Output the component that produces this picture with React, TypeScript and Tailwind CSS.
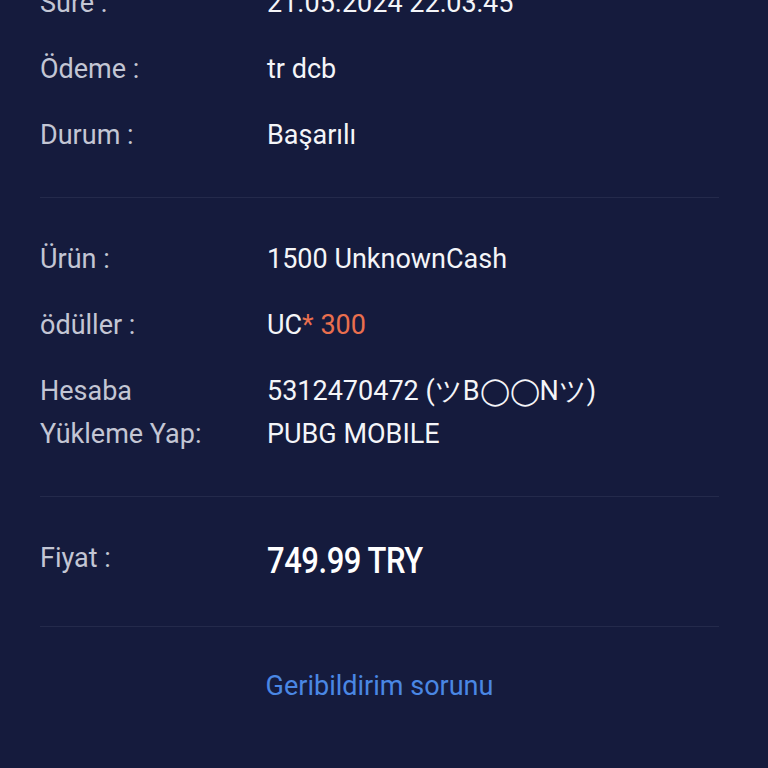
import React from "react";

const rowsTop = [
  { label: "Süre :", value: "21.05.2024 22:03:45" },
  { label: "Ödeme :", value: "tr dcb" },
  { label: "Durum :", value: "Başarılı" },
];

function Row({ label, children }: { label: React.ReactNode; children: React.ReactNode }) {
  return (
    <div className="flex items-start">
      <div className="w-[227px] shrink-0 text-[#c3c6d4]">{label}</div>
      <div className="text-[#f4f5f8]">{children}</div>
    </div>
  );
}

export default function App() {
  return (
    <div
      className="w-[768px] h-[768px] overflow-hidden bg-[#151b3d] text-[27px] leading-[43px]"
      style={{ fontFamily: "Roboto, 'Noto Sans', sans-serif" }}
    >
      <div className="pl-10 pr-[49px] -mt-[18px]">
        <div className="flex flex-col gap-[23px] pb-10 border-b border-[#242a4b]">
          {rowsTop.map((r) => (
            <Row key={r.label} label={r.label}>
              {r.value}
            </Row>
          ))}
        </div>

        <div className="flex flex-col gap-[23px] pt-10 pb-10 border-b border-[#242a4b]">
          <Row label="Ürün :">1500 UnknownCash</Row>
          <Row label="ödüller :">
            UC<span className="text-[#ea6f4e]">* 300</span>
          </Row>
          <Row
            label={
              <>
                Hesaba
                <br />
                Yükleme Yap:
              </>
            }
          >
            5312470472 (ツB◯◯Nツ)
            <br />
            PUBG MOBILE
          </Row>
        </div>

        <div className="pt-10 pb-10 border-b border-[#242a4b]">
          <Row label="Fiyat :">
            <span className="inline-block origin-left scale-x-[0.86] text-[36px] leading-[49px] font-medium tracking-[-0.5px] text-white">
              749.99 TRY
            </span>
          </Row>
        </div>

        <div className="pt-[38px] text-center text-[#4a87e4]">Geribildirim sorunu</div>
      </div>
    </div>
  );
}
